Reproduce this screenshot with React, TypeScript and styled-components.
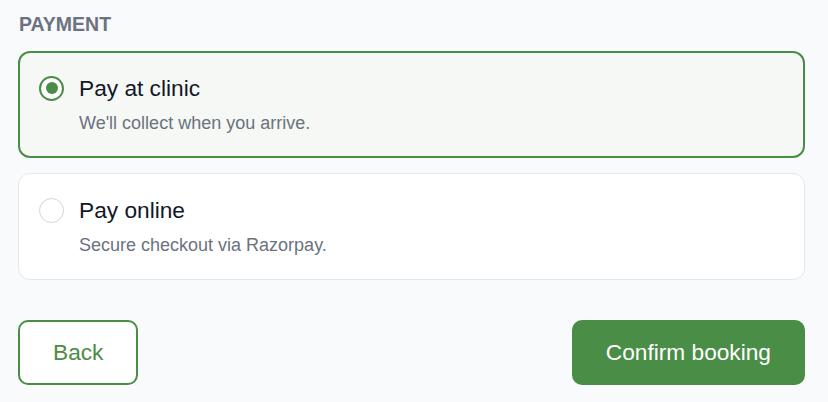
import React, { useState } from 'react';
import styled, { createGlobalStyle } from 'styled-components';

const GlobalStyle = createGlobalStyle`
  html, body {
    margin: 0;
    padding: 0;
    background: #f9fafb;
    font-family: "Liberation Sans", Arial, sans-serif;
  }
`;

const Page = styled.div`
  padding: 13px 23px 0 18px;
`;

const SectionLabel = styled.div`
  font-size: 19.5px;
  line-height: 22px;
  font-weight: 700;
  color: #6b7280;
  text-transform: uppercase;
  padding-left: 1px;
  margin-bottom: 16px;
`;

const Options = styled.div`
  display: flex;
  flex-direction: column;
  gap: 15px;
`;

const OptionCard = styled.label<{ $selected: boolean }>`
  display: grid;
  grid-template-columns: 25px 1fr;
  column-gap: 15px;
  row-gap: 11px;
  align-items: center;
  padding: ${(p) => (p.$selected ? '22px 19px 22px' : '23px 20px 23px')};
  border: ${(p) => (p.$selected ? '2px solid #4a8d47' : '1px solid #e5e7eb')};
  border-radius: 12px;
  background: ${(p) => (p.$selected ? '#f5f8f4' : '#ffffff')};
  cursor: pointer;
`;

const Radio = styled.span<{ $checked: boolean }>`
  box-sizing: border-box;
  width: 25px;
  height: 25px;
  border-radius: 50%;
  border: ${(p) => (p.$checked ? '2px solid #4a8d47' : '1.5px solid #d1d5db')};
  background: #ffffff;
  display: flex;
  align-items: center;
  justify-content: center;

  &::after {
    content: '';
    width: 12px;
    height: 12px;
    border-radius: 50%;
    background: #4a8d47;
    display: ${(p) => (p.$checked ? 'block' : 'none')};
  }
`;

const OptionTitle = styled.div`
  font-size: 22.7px;
  line-height: 26px;
  color: #111827;
`;

const OptionHint = styled.div`
  grid-column: 2;
  font-size: 18px;
  line-height: 22px;
  color: #6b7280;
`;

const Actions = styled.div`
  display: flex;
  justify-content: space-between;
  margin-top: 40px;
`;

const Button = styled.button<{ $primary?: boolean }>`
  box-sizing: border-box;
  height: 65px;
  padding: ${(p) => (p.$primary ? '0 32px' : '0 33px')};
  border-radius: 10px;
  font-family: "Liberation Sans", Arial, sans-serif;
  font-size: 22.7px;
  cursor: pointer;
  border: 2px solid #4a8d47;
  background: ${(p) => (p.$primary ? '#4a8d47' : '#ffffff')};
  color: ${(p) => (p.$primary ? '#ffffff' : '#4a8d47')};
`;

const options = [
  { id: 'clinic', title: 'Pay at clinic', hint: "We'll collect when you arrive." },
  { id: 'online', title: 'Pay online', hint: 'Secure checkout via Razorpay.' },
];

const App: React.FC = () => {
  const [method, setMethod] = useState('clinic');

  return (
    <>
      <GlobalStyle />
      <Page>
        <SectionLabel>Payment</SectionLabel>
        <Options>
          {options.map((o) => (
            <OptionCard
              key={o.id}
              $selected={method === o.id}
              onClick={() => setMethod(o.id)}
            >
              <Radio $checked={method === o.id} />
              <OptionTitle>{o.title}</OptionTitle>
              <OptionHint>{o.hint}</OptionHint>
            </OptionCard>
          ))}
        </Options>
        <Actions>
          <Button>Back</Button>
          <Button $primary>Confirm booking</Button>
        </Actions>
      </Page>
    </>
  );
};

export default App;
